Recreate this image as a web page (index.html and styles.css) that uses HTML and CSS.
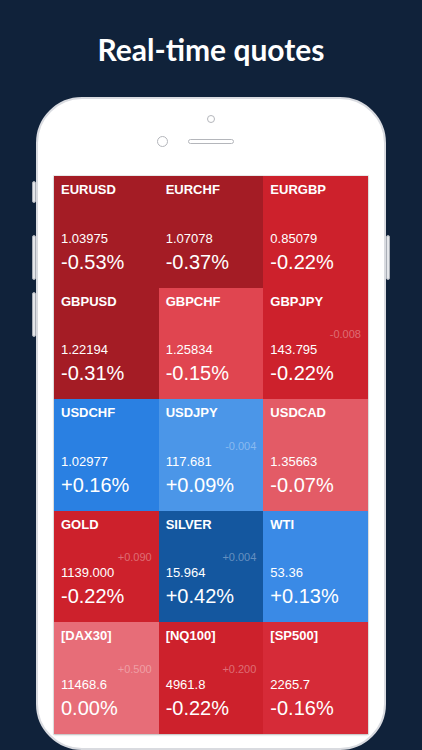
FILE: index.html
```html
<!DOCTYPE html>
<html lang="en">
<head>
    <meta charset="UTF-8">
    <meta name="viewport" content="width=device-width, initial-scale=1.0">
    <title>Real-time quotes</title>
    <link rel="stylesheet" href="styles.css">
</head>
<body>
    <h1 class="headline">Real-time quotes</h1>

    <div class="phone">
        <!-- hardware buttons -->
        <span class="side-btn mute"></span>
        <span class="side-btn vol-up"></span>
        <span class="side-btn vol-down"></span>
        <span class="side-btn power"></span>

        <div class="phone-top">
            <span class="sensor"></span>
            <div class="earpiece-row">
                <span class="camera"></span>
                <span class="speaker"></span>
                <span></span>
            </div>
        </div>

        <!-- Quotes heatmap -->
        <div class="quotes">
            <div class="quote dark-red">
                <div class="name">EURUSD</div>
                <div class="price">1.03975</div>
                <div class="pct">-0.53%</div>
            </div>
            <div class="quote dark-red">
                <div class="name">EURCHF</div>
                <div class="price">1.07078</div>
                <div class="pct">-0.37%</div>
            </div>
            <div class="quote red">
                <div class="name">EURGBP</div>
                <div class="price">0.85079</div>
                <div class="pct">-0.22%</div>
            </div>

            <div class="quote dark-red">
                <div class="name">GBPUSD</div>
                <div class="price">1.22194</div>
                <div class="pct">-0.31%</div>
            </div>
            <div class="quote light-red">
                <div class="name">GBPCHF</div>
                <div class="price">1.25834</div>
                <div class="pct">-0.15%</div>
            </div>
            <div class="quote red">
                <div class="name">GBPJPY</div>
                <div class="delta">-0.008</div>
                <div class="price">143.795</div>
                <div class="pct">-0.22%</div>
            </div>

            <div class="quote blue">
                <div class="name">USDCHF</div>
                <div class="price">1.02977</div>
                <div class="pct">+0.16%</div>
            </div>
            <div class="quote light-blue">
                <div class="name">USDJPY</div>
                <div class="delta">-0.004</div>
                <div class="price">117.681</div>
                <div class="pct">+0.09%</div>
            </div>
            <div class="quote pale-red">
                <div class="name">USDCAD</div>
                <div class="price">1.35663</div>
                <div class="pct">-0.07%</div>
            </div>

            <div class="quote red">
                <div class="name">GOLD</div>
                <div class="delta">+0.090</div>
                <div class="price">1139.000</div>
                <div class="pct">-0.22%</div>
            </div>
            <div class="quote deep-blue">
                <div class="name">SILVER</div>
                <div class="delta">+0.004</div>
                <div class="price">15.964</div>
                <div class="pct">+0.42%</div>
            </div>
            <div class="quote mid-blue">
                <div class="name">WTI</div>
                <div class="price">53.36</div>
                <div class="pct">+0.13%</div>
            </div>

            <div class="quote pink">
                <div class="name">[DAX30]</div>
                <div class="delta">+0.500</div>
                <div class="price">11468.6</div>
                <div class="pct">0.00%</div>
            </div>
            <div class="quote red">
                <div class="name">[NQ100]</div>
                <div class="delta">+0.200</div>
                <div class="price">4961.8</div>
                <div class="pct">-0.22%</div>
            </div>
            <div class="quote bright-red">
                <div class="name">[SP500]</div>
                <div class="price">2265.7</div>
                <div class="pct">-0.16%</div>
            </div>
        </div>
    </div>
</body>
</html>
```

FILE: styles.css
```css
body {
    margin: 0;
    height: 750px;
    overflow: hidden;
    background-color: #10223a;
    font-family: "Liberation Sans", Arial, sans-serif;
    display: flex;
    flex-direction: column;
    align-items: center;
}

.headline {
    margin: 0;
    padding-top: 31px;
    font-family: Lato, "Open Sans", sans-serif;
    font-size: 30px;
    line-height: 36px;
    font-weight: 700;
    color: #fff;
}

/* phone frame */
.phone {
    position: relative;
    margin-top: 30px;
    width: 350px;
    height: 700px;
    box-sizing: border-box;
    padding: 0 16px;
    background-color: #fff;
    border: 2px solid #d9dbe0;
    border-radius: 46px;
}

.side-btn {
    position: absolute;
    width: 2px;
    background-color: #e4e6ea;
    border: 1px solid #a9aeb6;
    border-radius: 2px;
}

.mute { left: -6px; top: 82px; height: 20px; }
.vol-up { left: -6px; top: 136px; height: 43px; }
.vol-down { left: -6px; top: 193px; height: 43px; }
.power { right: -6px; top: 136px; height: 43px; }

.phone-top {
    height: 77px;
    display: flex;
    flex-direction: column;
    align-items: center;
}

.sensor {
    margin-top: 16px;
    width: 6px;
    height: 6px;
    border: 1.5px solid #b4b6bb;
    border-radius: 50%;
}

.earpiece-row {
    margin-top: 13px;
    width: 100%;
    display: grid;
    grid-template-columns: 1fr auto 1fr;
    align-items: center;
}

.camera {
    justify-self: end;
    margin-right: 20px;
    width: 9px;
    height: 9px;
    border: 1.5px solid #b4b6bb;
    border-radius: 50%;
}

.speaker {
    width: 44px;
    height: 3px;
    border: 1.5px solid #b4b6bb;
    border-radius: 3px;
}

/* quotes heatmap */
.quotes {
    display: grid;
    grid-template-columns: repeat(3, 1fr);
    grid-template-rows: repeat(5, 1fr);
    height: 558px;
    box-shadow: 0 0 0 1px rgba(0, 0, 0, 0.08), 0 1px 2px rgba(0, 0, 0, 0.2);
}

.quote {
    display: flex;
    flex-direction: column;
    padding: 6px 7px 15px 7px;
    color: #fff;
    min-width: 0;
}

.name {
    font-size: 13px;
    line-height: 16px;
    font-weight: 700;
    margin-bottom: auto;
}

.delta {
    align-self: flex-end;
    font-size: 11px;
    line-height: 13px;
    color: rgba(255, 255, 255, 0.35);
    margin-bottom: 1px;
}

.price {
    font-size: 13px;
    line-height: 16px;
    margin-bottom: 4px;
}

.pct {
    font-size: 20px;
    line-height: 22px;
}

.dark-red { background-color: #a41c25; }
.red { background-color: #cd212c; }
.bright-red { background-color: #d62b38; }
.light-red { background-color: #e04550; }
.pale-red { background-color: #e35b66; }
.pink { background-color: #e76d78; }
.blue { background-color: #2a80e2; }
.light-blue { background-color: #4b96e8; }
.mid-blue { background-color: #3a8ae6; }
.deep-blue { background-color: #14579f; }
```
